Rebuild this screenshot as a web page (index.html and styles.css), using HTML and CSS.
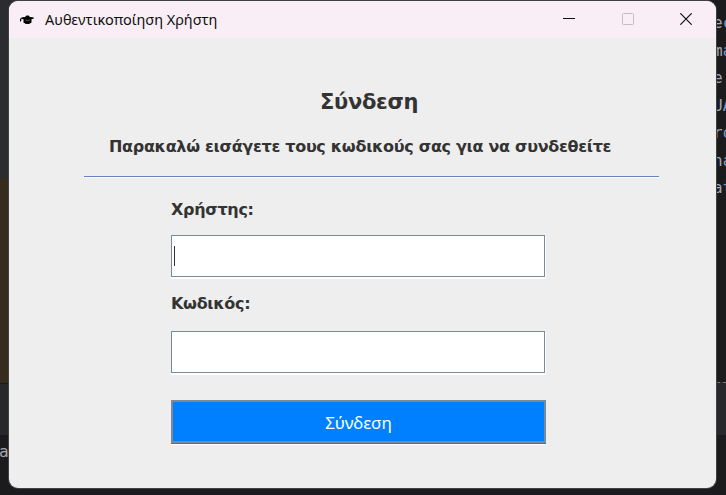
FILE: index.html
```html
<!DOCTYPE html>
<html lang="el">
<head>
<meta charset="utf-8">
<title>Αυθεντικοποίηση Χρήστη</title>
<link rel="stylesheet" href="styles.css">
</head>
<body>
<div class="desktop">
  <div class="backdrop">
    <div class="side">
      <div class="panel"></div>
      <div class="highlight"></div>
      <div class="toolbar"></div>
      <div class="console">a</div>
    </div>
    <div class="editor">
      <div class="code">
        <span>e<b>c</b></span><span>m<b>a</b></span><span>e</span><span>U<b>A</b></span><span>r<b>o</b></span><span>n<b>a</b></span><span>a<b>t</b></span>
      </div>
      <div class="toolbar edge"></div>
    </div>
  </div>
  <main class="window">
    <header class="titlebar">
      <svg class="app-icon" width="14" height="10" viewBox="0 0 14 10"><path d="M0 4 2 2.300 5 2 6.500.5H8.500L10 2 13.800 2.500V3.600L11.500 4.300V7.500L9 9H6L3.500 7.500V4.300L1.500 3.800 1 6.500H0Z"/><path d="M5.500 5 7.500 5.600 10 4.800" fill="none" stroke="#999" stroke-width=".6"/></svg>
      <span class="caption">Αυθεντικοποίηση Χρήστη</span>
      <div class="controls">
        <svg width="12" height="12" viewBox="0 0 12 12"><path d="M0 5.500H12" stroke="#111"/></svg>
        <svg width="12" height="12" viewBox="0 0 12 12"><rect x=".5" y=".5" width="11" height="11" rx="1" fill="none" stroke="#c4bdc1"/></svg>
        <svg width="12" height="12" viewBox="0 0 12 12"><path d="M.3.3 11.700 11.700M11.700.3.3 11.700" stroke="#111" stroke-width="1.200"/></svg>
      </div>
    </header>
    <section class="content">
      <h1><span>Σύνδεση</span></h1>
      <p class="hint"><span>Παρακαλώ εισάγετε τους κωδικούς σας για να συνδεθείτε</span></p>
      <form class="login">
        <label class="user">Χρήστης:</label>
        <div class="field"><i class="caret"></i></div>
        <label class="pass">Κωδικός:</label>
        <div class="field"></div>
        <button type="button">Σύνδεση</button>
      </form>
    </section>
  </main>
</div>
</body>
</html>
```

FILE: styles.css
```css
* { box-sizing: border-box; }
body { margin: 0; overflow: hidden; }
.desktop { display: grid; width: 726px; height: 495px; background: #1b1b1d; overflow: hidden; }
.backdrop, .window { grid-area: 1 / 1; }
.backdrop { display: flex; justify-content: space-between; background: linear-gradient(#36373b 0 12px, #1b1b1d 12px); height: 495px; }
.side { width: 20px; display: flex; flex-direction: column; }
.panel { height: 178px; background: #2a2c2f; }
.highlight { height: 205px; background: #372b1d; }
.toolbar { height: 52px; background: #26282b; border-top: 1px solid #1b1b1d; }
.console { height: 60px; padding-top: 6px; font: 16px/22px "DejaVu Sans Mono", monospace; color: #a5a8af; background: #1b1b1d; text-indent: -1px; }
.editor { width: 20px; background: #1b1b1d; display: flex; flex-direction: column; }
.code { height: 382px; padding: 9px 0 0 7px; font: 16px/27.5px "DejaVu Sans Mono", monospace; color: #a5a8af; overflow: hidden; }
.code span { display: block; white-space: nowrap; }
.code b { font-weight: 400; color: #6d9fd0; }
.edge { height: 53px; border-top: 1px dashed #77787b; }
.window { width: 707px; height: 487px; margin: 1px 0 0 9px; border-radius: 9px; background: #eee; overflow: hidden; box-shadow: 0 0 0 1px #404144; }
.titlebar { height: 37px; display: flex; align-items: center; padding: 0 24px 0 11px; background: #f9eef5; }
.app-icon { margin-right: 11px; }
.caption { font: 14.5px/20px "Noto Sans", sans-serif; color: #111; width: 172px; margin-top: -1px; letter-spacing: -0.03px; white-space: nowrap; }
.controls { display: flex; gap: 46.5px; margin: -1px 0 0 auto; }
.controls svg { display: block; }
.content { display: flex; flex-direction: column; color: #333; font-family: "DejaVu Sans", sans-serif; }
h1 { margin: 49px 0 0 311px; font-size: 21px; line-height: 30px; letter-spacing: -0.3px; }
.hint { margin: 18px 57px 0 75px; height: 42px; padding-left: 25px; font-weight: 700; font-size: 16px; letter-spacing: -0.31px; line-height: 24px; border-bottom: 1px solid #6382bf; box-shadow: 0 1px #fff; white-space: nowrap; }
.login { width: 375px; margin-left: 162px; display: flex; flex-direction: column; }
label { font-weight: 700; font-size: 16px; letter-spacing: -0.31px; line-height: 24px; }
.user { margin: 21px 0 13px; }
.pass { margin: 15px 0 15px; }
.field { height: 42px; width: 374px; padding: 10px 2px; background: #fff; border: 1px solid #7a8a99; box-shadow: 1px 1px #fff, 0 2px #fff; }
.caret { display: block; width: 1px; height: 20px; background: #333; }
button { height: 43px; margin-top: 27px; padding: 3px 0 0; border: 2px solid #7a8a99; border-radius: 0; box-shadow: 0 1px #0080ff, 0 2px #fff; background: #0080ff; color: #fff; font: 17px/24px "Noto Sans", sans-serif; }
```
